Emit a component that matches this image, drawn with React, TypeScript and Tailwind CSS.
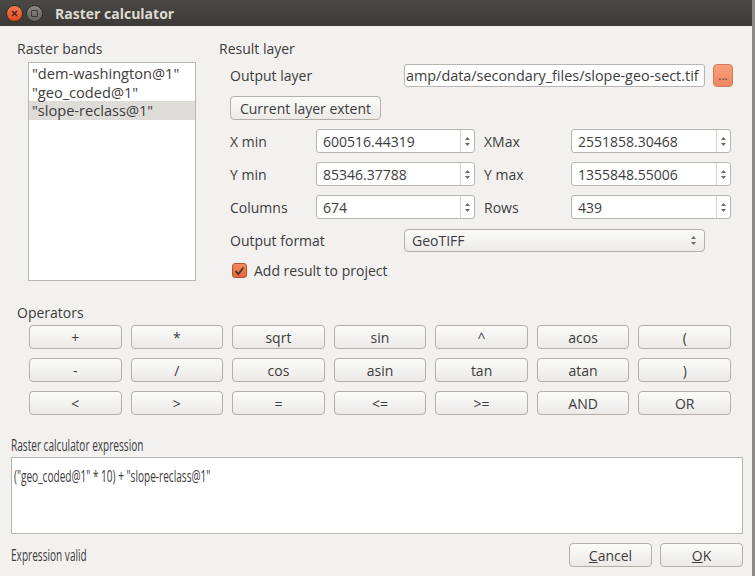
import React from "react";

const OPERATORS = [
  ["+", "*", "sqrt", "sin", "^", "acos", "("],
  ["-", "/", "cos", "asin", "tan", "atan", ")"],
  ["<", ">", "=", "<=", ">=", "AND", "OR"],
];

const BANDS = ['"dem-washington@1"', '"geo_coded@1"', '"slope-reclass@1"'];

const btn =
  "flex items-center justify-center rounded-[4px] border border-[#b3b0ab] bg-gradient-to-b from-[#fbfbfa] to-[#ebeae8] text-[14px] leading-[17px] text-[#3c3c3c]";

const UpDown = () => (
  <>
    <svg width="5" height="3" viewBox="0 0 5 3">
      <path d="M0 3 L2.5 0 L5 3 Z" fill="#6b6a67" />
    </svg>
    <svg width="5" height="3" viewBox="0 0 5 3">
      <path d="M0 0 L2.5 3 L5 0 Z" fill="#6b6a67" />
    </svg>
  </>
);

const SpinBox = ({ value, width }: { value: string; width: string }) => (
  <div className={`flex h-[24px] ${width} rounded-[3px] border border-[#b8b5b1] bg-white`}>
    <div className="flex flex-1 items-center pl-[6px] text-[14px] leading-[17px] text-[#3c3c3c]">
      {value}
    </div>
    <div className="flex w-[14px] flex-col items-center justify-center gap-[3px] border-l border-[#d6d3cf]">
      <UpDown />
    </div>
  </div>
);

const Label = ({ children, className = "" }: { children: React.ReactNode; className?: string }) => (
  <div className={`text-[14px] leading-[17px] text-[#3c3c3c] ${className}`}>{children}</div>
);

// condensed text, the dialog's bottom part uses a narrow face
const Narrow = ({ children }: { children: React.ReactNode }) => (
  <span className="inline-block origin-left scale-x-[0.63] whitespace-nowrap text-[16px] leading-[17px] text-[#3c3c3c]">
    {children}
  </span>
);

export default function App() {
  return (
    <div className="flex h-[576px] w-[755px] flex-col overflow-hidden border-r-[3px] border-[#8d8b87] bg-[#f2f1f0] font-['Open_Sans',sans-serif]">
      {/* title bar */}
      <div className="flex h-[26px] shrink-0 items-center bg-gradient-to-b from-[#4a4945] to-[#3b3a36] pl-[6px]">
        <div className="flex h-[17px] w-[17px] items-center justify-center rounded-full border border-[#3a2a22] bg-gradient-to-b from-[#f37a50] to-[#df4b1c]">
          <svg width="7" height="7" viewBox="0 0 7 7">
            <path d="M1 1 L6 6 M6 1 L1 6" stroke="#4a2518" strokeWidth="1.4" />
          </svg>
        </div>
        <div className="ml-[3px] flex h-[17px] w-[17px] items-center justify-center rounded-full border border-[#2e2d2a] bg-gradient-to-b from-[#8a8884] to-[#64635f]">
          <div className="h-[7px] w-[7px] rounded-[1px] border border-[#3a3936]" />
        </div>
        <div className="ml-[12px] text-[14px] font-bold text-[#dfdbd2]">Raster calculator</div>
      </div>

      {/* top section */}
      <div className="flex h-[264px] shrink-0 pt-[14px]">
        <div className="w-[202px] shrink-0 pl-[17px]">
          <Label>Raster bands</Label>
          <div className="ml-[11px] mt-[5px] h-[219px] w-[168px] border border-[#bab7b3] bg-white pt-[1px]">
            {BANDS.map((b, i) => (
              <div
                key={b}
                className={`flex h-[18.5px] items-center pl-[3px] text-[14.6px] leading-[18px] text-[#3c3c3c] ${
                  i === 2 ? "bg-[#dedcd9]" : ""
                }`}
              >
                {b}
              </div>
            ))}
          </div>
        </div>

        <div className="flex-1 pl-[17px]">
          <Label>Result layer</Label>
          <div className="pl-[11px]">
            <div className="mt-[7px] flex h-[23px] items-center">
              <Label className="w-[174px]">Output layer</Label>
              <div className="flex h-[23px] w-[301px] items-center overflow-hidden whitespace-nowrap rounded-[3px] border border-[#b8b5b1] bg-white text-[14.4px] leading-[17px] text-[#3c3c3c]">
                <span className="ml-[1px]">amp/data/secondary_files/slope-geo-sect.tif</span>
              </div>
              <div className="ml-[8px] flex h-[23px] w-[20px] items-end justify-center rounded-[4px] border border-[#d27a55] bg-gradient-to-b from-[#f7a07c] to-[#f0875d] pb-[4px] text-[12px] leading-none text-[#5a3626]">
                ...
              </div>
            </div>

            <div className={`${btn} mt-[9px] h-[24px] w-[151px]`}>Current layer extent</div>

            <div className="mt-[9px] flex flex-col gap-[9px]">
              {[
                ["X min", "600516.44319", "XMax", "2551858.30468"],
                ["Y min", "85346.37788", "Y max", "1355848.55006"],
                ["Columns", "674", "Rows", "439"],
              ].map(([l1, v1, l2, v2]) => (
                <div key={l1} className="flex items-center">
                  <Label className="w-[86px]">{l1}</Label>
                  <SpinBox value={v1} width="w-[159px]" />
                  <Label className="ml-[9px] w-[87px]">{l2}</Label>
                  <SpinBox value={v2} width="w-[160px]" />
                </div>
              ))}
            </div>

            <div className="mt-[10px] flex items-center">
              <Label className="w-[174px]">Output format</Label>
              <div className={`${btn} h-[23px] w-[301px] justify-between! rounded-[3px] pl-[7px] pr-[8px]`}>
                <span>GeoTIFF</span>
                <div className="flex flex-col gap-[3px]">
                  <UpDown />
                </div>
              </div>
            </div>

            <div className="mt-[10px] flex h-[17px] items-center">
              <div className="ml-[2px] flex h-[15px] w-[15px] items-center justify-center rounded-[3px] border border-[#b9532c] bg-gradient-to-b from-[#f18a62] to-[#e3663a]">
                <svg width="11" height="10" viewBox="0 0 11 10">
                  <path d="M1.5 5 L4.3 8 L9.5 1.5" fill="none" stroke="#4d3127" strokeWidth="1.8" />
                </svg>
              </div>
              <Label className="ml-[7px]">Add result to project</Label>
            </div>
          </div>
        </div>
      </div>

      {/* operators */}
      <div className="shrink-0 pl-[17px] pt-[14px]">
        <Label>Operators</Label>
        <div className="ml-[12px] mt-[4px] grid w-[702px] grid-cols-7 gap-[9px]">
          {OPERATORS.flat().map((op, i) => (
            <div key={i} className={`${btn} h-[24px]`}>
              {op}
            </div>
          ))}
        </div>
      </div>

      {/* expression */}
      <div className="shrink-0 pl-[11px] pr-[9px] pt-[18px]">
        <div className="h-[17px]">
          <Narrow>Raster calculator expression</Narrow>
        </div>
        <div className="mt-[7px] h-[77px] w-[732px] border border-[#b8b5b1] bg-white pl-[2px] pt-[6px]">
          <Narrow>("geo_coded@1" * 10) + "slope-reclass@1"</Narrow>
        </div>
        <div className="mt-[9px] flex items-center">
          <div className="flex-1">
            <Narrow>Expression valid</Narrow>
          </div>
          <div className={`${btn} h-[24px] w-[83px]`}>
            <span>
              <span className="underline">C</span>ancel
            </span>
          </div>
          <div className={`${btn} ml-[8px] h-[24px] w-[83px]`}>
            <span>
              <span className="underline">O</span>K
            </span>
          </div>
        </div>
      </div>
    </div>
  );
}
